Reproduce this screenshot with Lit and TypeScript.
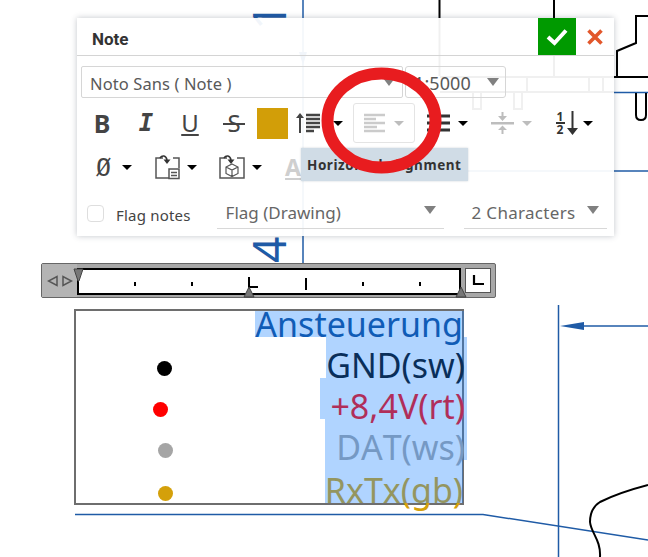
import { LitElement, css, html } from 'lit'
import { customElement } from 'lit/decorators.js'

const LINES = [
  { text: 'Ansteuerung', color: '#0a478f', height: 26, left: 0, right: 1, over: 2, dot: '', dotX: 0 },
  { text: 'GND(sw)', color: '#000000', height: 41, left: 0, right: 2, over: 5, dot: '#000000', dotX: 81 },
  { text: '+8,4V(rt)', color: '#ff0000', height: 41, left: 10, right: 2, over: 5, dot: '#ff0000', dotX: 76.5 },
  { text: 'DAT(ws)', color: '#a5a5a5', height: 41, left: 11, right: 2, over: 5, dot: '#a5a5a5', dotX: 82 },
  { text: 'RxTx(gb)', color: '#d4a00a', height: 43, left: 0, right: 0, over: 1, dot: '#d4a00a', dotX: 81.5 },
]

const caret = (cls = '') => html`<span class="caret ${cls}"></span>`

@customElement('app-root')
export class AppRoot extends LitElement {
  #drawing() {
    return html`
      <svg class="drawing" width="648" height="557" viewBox="0 0 648 557" fill="none">
        <g stroke="#1f5ba6" stroke-width="1.5">
          <path d="M303 0V263" />
          <path d="M558.5 305V557" />
          <path d="M583 326H648" />
          <path d="M75 514.5H483L648 540" />
          <path d="M440 171H648" />
          <path d="M614 92.5H648" />
        </g>
        <path d="M560 326L584 322V330Z" fill="#1f5ba6" />
        <path d="M303 65L299 52H307Z" fill="#1f5ba6" />
        <text class="dim" transform="translate(286 263) rotate(-90)">4</text>
        <text class="dim" transform="translate(286 30) rotate(-90)">1</text>
        <g stroke="#000" stroke-width="2">
          <path d="M439.5 0V76" />
          <path d="M554 0V76" />
          <path d="M440 77H648" />
          <path d="M440 92H614" />
          <path d="M527 77V92M589 77V92M603 77V92" />
          <path d="M473 92V109H481V92M514 92V109H522V92" />
          <path d="M648 16H636V43L617 51V77" />
          <path d="M636 93V115Q636 120 641 120Q646 120 646 115V93" />
        </g>
        <path
          d="M648 485C625 491 610 497 600 502C592 507 590 515 590 522C591 533 601 540 600 557"
          stroke="#000"
          stroke-width="2"
        />
      </svg>
    `
  }

  #toolbar() {
    return html`
      <div class="tools">
        <span class="tool glyph bold">B</span>
        <span class="tool glyph italic">I</span>
        <span class="tool glyph under">U</span>
        <span class="tool glyph strike">S</span>
        <span class="swatch"></span>
        <span class="icon-group spacing">
          <svg width="24" height="20" viewBox="0 0 24 20" fill="none" stroke="#444">
            <path d="M4 20V3" stroke-width="2" />
            <path d="M4 0L8 5H0Z" fill="#444" stroke="none" />
            <path d="M10 2H24M10 6H24M10 10H24M10 14H24M10 18H18" stroke-width="2.4" />
          </svg>
          ${caret()}
        </span>
        <span class="align-btn">
          <svg width="21" height="20" viewBox="0 0 21 20" fill="none" stroke="#cbcbcb" stroke-width="2.4">
            <path d="M0 2H21M0 6H12M0 10H21M0 14H13M0 18H21" />
          </svg>
          ${caret('muted')}
        </span>
        <span class="icon-group list">
          <svg width="23" height="20" viewBox="0 0 23 20" fill="none" stroke="#333" stroke-width="3">
            <path d="M0 3H4M7 3H23M0 10H4M7 10H23M0 17H4M7 17H23" />
          </svg>
          ${caret()}
        </span>
        <span class="icon-group vcenter">
          <svg width="23" height="22" viewBox="0 0 23 22" fill="#bdbdbd">
            <path d="M10.5 0H12.5V4H16L11.5 9L7 4H10.5Z" />
            <path d="M0 10H23V12.5H0Z" />
            <path d="M10.5 22H12.5V18H16L11.5 13.5L7 18H10.5Z" />
          </svg>
          ${caret('muted')}
        </span>
        <span class="icon-group frac">
          <span class="frac-num">
            <span>1</span>
            <span class="frac-bar"></span>
            <span>2</span>
          </span>
          <svg width="11" height="24" viewBox="0 0 11 24" fill="#333">
            <path d="M4.5 0H6.5V17H11L5.5 24L0 17H4.5Z" />
          </svg>
          ${caret()}
        </span>
      </div>
    `
  }

  #toolbarTwo() {
    return html`
      <div class="tools second">
        <span class="icon-group slash">
          <span class="glyph slashed">Ø</span>
          ${caret()}
        </span>
        <span class="icon-group attach">
          <svg width="25" height="25" viewBox="0 0 25 25" fill="none" stroke="#555" stroke-width="1.5">
            <path d="M8 3H1V23H14M18 3H24V13" />
            <path d="M5 3C7 0 11 0 12 5" stroke="#333" stroke-width="1.6" />
            <path d="M8.5 4.5H15.5L12 9Z" fill="#333" stroke="none" />
            <rect x="14" y="14" width="10" height="9.5" />
            <path d="M16 17.5H22M16 20.5H22" />
          </svg>
          ${caret()}
        </span>
        <span class="icon-group attach cube">
          <svg width="26" height="25" viewBox="0 0 26 25" fill="none" stroke="#555" stroke-width="1.5">
            <path d="M8 3H1V23H25V3H18" />
            <path d="M5 3C7 0 11 0 12 5" stroke="#333" stroke-width="1.6" />
            <path d="M8.5 4.5H15.5L12 9Z" fill="#333" stroke="none" />
            <path d="M13 9L19 12V18.5L13 21.5L7 18.5V12L13 9ZM7 12L13 15L19 12M13 15V21.5" stroke-width="1.2" />
          </svg>
          ${caret()}
        </span>
        <span class="aa">Aa</span>
      </div>
    `
  }

  #dialog() {
    return html`
      <section class="dialog">
        <header class="head">
          <span class="title">Note</span>
          <span class="ok">
            <svg width="22" height="18" viewBox="0 0 22 18" fill="none" stroke="#fff" stroke-width="4">
              <path d="M2 9L8.5 15L20 2.5" />
            </svg>
          </span>
          <span class="close">
            <svg width="16" height="16" viewBox="0 0 16 16" fill="none" stroke="#e2572b" stroke-width="3.6">
              <path d="M1.5 1.5L14.5 14.5M14.5 1.5L1.5 14.5" />
            </svg>
          </span>
        </header>
        <div class="selects">
          <div class="select font-select"><span>Noto Sans ( Note )</span>${caret('big')}</div>
          <div class="select size-select"><span>1:5000</span>${caret('big')}</div>
        </div>
        ${this.#toolbar()} ${this.#toolbarTwo()}
        <div class="flags">
          <span class="check"></span>
          <span class="flag-label">Flag notes</span>
          <div class="under-select type"><span>Flag (Drawing)</span>${caret('big')}</div>
          <div class="under-select chars"><span>2 Characters</span>${caret('big')}</div>
        </div>
      </section>
    `
  }

  #ruler() {
    return html`
      <div class="ruler">
        <div class="grip">
          <svg width="26" height="12" viewBox="0 0 26 12" fill="none" stroke="#555" stroke-width="1.5">
            <path d="M10 1.5V10.5L1.5 6Z" />
            <path d="M16 1.5V10.5L24.5 6Z" />
          </svg>
        </div>
        <div class="strip">
          <svg width="384" height="36" viewBox="0 0 384 36" fill="none">
            <g stroke="#000" stroke-width="2">
              <path d="M57 16V20M114 16V20M285 16V20M342 16V20" />
              <path d="M228 12V24" />
              <path d="M171 11V30M171 21H180" />
            </g>
            <path d="M-4 3H5L1 15H0Z" fill="#777" stroke="#444" />
            <path d="M171 21L176 31H166Z" fill="#777" stroke="#444" />
            <path d="M383 21L388 31H378Z" fill="#777" stroke="#444" />
          </svg>
        </div>
        <div class="corner">
          <span class="corner-box">
            <svg width="12" height="11" viewBox="0 0 12 11" fill="none" stroke="#000" stroke-width="2.2">
              <path d="M2 0V9H12" />
            </svg>
          </span>
        </div>
      </div>
    `
  }

  #frame() {
    return html`
      <div class="frame">
        ${LINES.map(
          (line) => html`
            <div class="row" style="height:${line.height}px">
              ${line.dot
                ? html`<span class="dot" style="background:${line.dot};margin-left:${line.dotX}px"></span>`
                : ''}
              <span
                class="sel"
                style="color:${line.color};padding:0 ${line.right}px 0 ${line.left}px;margin-right:-${line.over}px"
                >${line.text}</span
              >
            </div>
          `,
        )}
      </div>
    `
  }

  render() {
    return html`
      <main class="canvas">
        ${this.#drawing()} ${this.#dialog()} ${this.#ruler()} ${this.#frame()}
        <div class="tip">Horizontal alignment</div>
        <svg class="ring" width="648" height="200" viewBox="0 0 648 200" fill="none">
          <ellipse cx="381.5" cy="120.5" rx="54" ry="47" stroke="#e81c1f" stroke-width="12" />
        </svg>
      </main>
    `
  }

  static styles = css`
    :host {
      display: block;
      font-family: 'Noto Sans', sans-serif;
    }

    .canvas {
      position: relative;
      width: 648px;
      height: 557px;
      overflow: hidden;
      background: #fff;
    }

    .drawing,
    .ring {
      position: absolute;
      left: 0;
      top: 0;
    }

    .dim {
      font-size: 46px;
      fill: #1f5ba6;
      font-family: 'Noto Sans', sans-serif;
    }

    .dialog {
      position: absolute;
      left: 77px;
      top: 18px;
      width: 537px;
      height: 218px;
      display: flex;
      flex-direction: column;
      background: rgba(255, 255, 255, 0.94);
      box-shadow: 0 0 6px rgba(40, 50, 70, 0.28);
    }

    .head {
      display: flex;
      align-items: center;
      height: 37px;
      flex: none;
      border-bottom: 1px solid #d4d4d4;
    }

    .title {
      flex: 1;
      padding: 5px 0 0 15px;
      font-family: Roboto, sans-serif;
      font-size: 17px;
      font-weight: 700;
      color: #333;
    }

    .ok {
      width: 38px;
      height: 37px;
      display: flex;
      align-items: center;
      justify-content: center;
      background: #009a00;
    }

    .close {
      width: 38px;
      display: flex;
      justify-content: center;
    }

    .selects {
      display: flex;
      gap: 2px;
      padding: 10px 0 0 4px;
    }

    .select {
      display: flex;
      align-items: center;
      justify-content: space-between;
      box-sizing: border-box;
      height: 32px;
      padding: 2px 8px 0;
      border: 1px solid #d6d6d6;
      border-radius: 2px;
      font-size: 16.5px;
      letter-spacing: 0.1px;
      color: #595959;
    }

    .font-select {
      width: 322px;
      padding-right: 7px;
    }

    .size-select {
      width: 101px;
      padding-right: 6px;
      border-radius: 3px;
      font-size: 18px;
    }

    .select .caret {
      margin-top: -2px;
    }

    .caret {
      width: 0;
      height: 0;
      flex: none;
      border-left: 5px solid transparent;
      border-right: 5px solid transparent;
      border-top: 5px solid #000;
    }

    .caret.muted {
      border-top-color: #bdbdbd;
    }

    .caret.big {
      border-left-width: 6px;
      border-right-width: 6px;
      border-top: 8px solid #808080;
    }

    .tools {
      display: flex;
      align-items: center;
      height: 32px;
      margin-top: 9px;
      padding-left: 3px;
    }

    .tools.second {
      margin-top: 12px;
    }

    .tool {
      width: 44px;
      text-align: center;
    }

    .glyph {
      color: #444;
      line-height: 1;
    }

    .bold {
      font-size: 25px;
      font-weight: 700;
    }

    .italic {
      font-family: 'DejaVu Sans Mono', monospace;
      font-size: 24px;
      font-weight: 700;
      font-style: italic;
    }

    .under {
      font-size: 24px;
      text-decoration: underline;
      text-decoration-thickness: 2px;
      text-underline-offset: 2px;
    }

    .strike {
      font-size: 24px;
      background: linear-gradient(#444, #444) center 55% / 22px 2px no-repeat;
    }

    .swatch {
      width: 31px;
      height: 31px;
      margin-left: 1px;
      background: #d29e08;
    }

    .icon-group {
      display: flex;
      align-items: center;
    }

    .spacing {
      gap: 13px;
      margin-left: 8px;
    }

    .align-btn {
      box-sizing: border-box;
      display: flex;
      align-items: center;
      gap: 9px;
      width: 62px;
      height: 40px;
      margin-left: 10px;
      padding-left: 10px;
      border: 1px solid #e4e4e4;
      border-radius: 3px;
    }

    .list {
      gap: 8px;
      margin-left: 12px;
    }

    .vcenter {
      gap: 8px;
      margin-left: 23px;
    }

    .frac {
      gap: 1px;
      margin-left: 23px;
    }

    .frac .caret {
      margin-left: 4px;
    }

    .frac-num {
      display: flex;
      flex-direction: column;
      align-items: center;
      width: 10px;
      margin-right: 1px;
      font-size: 12px;
      font-weight: 700;
      line-height: 11px;
      color: #333;
    }

    .frac-bar {
      width: 9px;
      height: 2px;
      background: #333;
    }

    .slash {
      gap: 11px;
      margin-left: 16px;
    }

    .slashed {
      font-family: 'DejaVu Sans Mono', monospace;
      font-size: 25px;
    }

    .attach {
      gap: 7px;
      margin-left: 23px;
    }

    .attach.cube {
      margin-left: 22px;
    }

    .aa {
      margin-left: 23px;
      font-size: 23px;
      font-weight: 700;
      color: #cfcfcf;
      text-decoration: underline;
    }

    .flags {
      display: flex;
      align-items: flex-end;
      margin-top: 11px;
      padding-left: 10px;
    }

    .check {
      box-sizing: border-box;
      width: 17px;
      height: 17px;
      margin-bottom: 7px;
      border: 1px solid #dedede;
      border-radius: 4px;
    }

    .flag-label {
      margin: 0 26px 4px 12px;
      font-size: 15px;
      letter-spacing: 0.2px;
      color: #444;
      white-space: nowrap;
    }

    .under-select {
      display: flex;
      align-items: center;
      justify-content: space-between;
      box-sizing: border-box;
      height: 35px;
      padding-top: 3px;
      border-bottom: 1px solid #d8d8d8;
      font-size: 17px;
      color: #666;
    }

    .type {
      width: 227px;
      padding-left: 9px;
      padding-right: 8px;
    }

    .chars {
      width: 143px;
      margin-left: 20px;
      padding-left: 8px;
      padding-right: 8px;
      letter-spacing: 0.3px;
    }

    .under-select .caret {
      margin-top: -6px;
    }

    .ruler {
      position: absolute;
      left: 41px;
      top: 263px;
      box-sizing: border-box;
      width: 455px;
      height: 35px;
      display: flex;
      background: #a8a8a8;
      border: 1px solid #666;
      border-radius: 2px;
    }

    .grip {
      width: 35px;
      display: flex;
      align-items: center;
      justify-content: center;
      background: #b4b4b4;
    }

    .strip {
      box-sizing: border-box;
      width: 384px;
      height: 27px;
      margin-top: 4px;
      background: #fff;
      border: 2px solid #000;
    }

    .strip svg {
      display: block;
      margin: -4px 0 0 -1px;
      overflow: visible;
    }

    .corner {
      flex: 1;
      display: flex;
      align-items: center;
      justify-content: center;
    }

    .corner-box {
      box-sizing: border-box;
      width: 26px;
      height: 25px;
      display: flex;
      align-items: center;
      justify-content: center;
      background: #fff;
      border: 1px solid #555;
    }

    .frame {
      position: absolute;
      left: 74px;
      top: 309px;
      box-sizing: border-box;
      width: 390px;
      height: 196px;
      border: 2px solid #6e6e6e;
    }

    .row {
      display: flex;
      align-items: flex-end;
    }

    .dot {
      width: 15px;
      height: 15px;
      flex: none;
      margin-bottom: 2px;
      border-radius: 50%;
    }

    .sel {
      position: relative;
      margin-left: auto;
      height: 100%;
      display: flex;
      align-items: flex-end;
      font-size: 34px;
      font-kerning: none;
      line-height: 26px;
      white-space: nowrap;
    }

    .sel::after {
      content: '';
      position: absolute;
      inset: 0;
      background: rgba(29, 131, 255, 0.35);
    }

    .tip {
      position: absolute;
      left: 301px;
      top: 148px;
      box-sizing: border-box;
      width: 167px;
      height: 33px;
      display: flex;
      align-items: center;
      padding-left: 6px;
      background: #d0dce6;
      box-shadow: 0 0 2px rgba(60, 80, 100, 0.25);
      font-size: 13.5px;
      font-weight: 700;
      color: #333;
      letter-spacing: 0.55px;
      white-space: nowrap;
    }
  `
}

declare global {
  interface HTMLElementTagNameMap {
    'app-root': AppRoot
  }
}
